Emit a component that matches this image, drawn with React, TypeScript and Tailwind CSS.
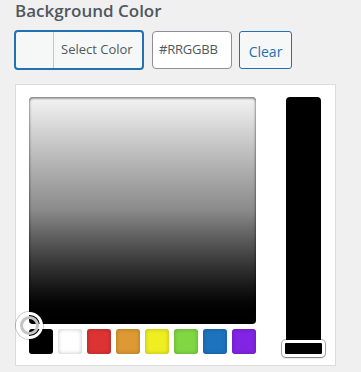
const SWATCHES = ['#000000', '#ffffff', '#dd3333', '#dd9933', '#eeee22', '#81d742', '#1e73be', '#8224e3'];

export default function App() {
  return (
    <div className="min-h-[372px] w-[361px] bg-[#f0f0f1] pl-[14px] text-[#3c434a]" style={{ fontFamily: '"Open Sans", "Noto Sans", sans-serif' }}>
      <h2 className="h-[22px] pl-[1px] text-[17px] font-semibold leading-[22px] text-[#50575e]">Background Color</h2>

      <div className="mt-[8px] flex items-center">
        <button className="flex h-[40px] w-[130px] items-stretch overflow-hidden rounded-[4px] border-2 border-[#2271b1] bg-[#f6f7f7] p-0">
          <span className="w-[38px] border-r border-[#c3c4c7]" />
          <span className="flex flex-1 items-center pl-[7px] text-[13px] text-[#50575e]">Select Color</span>
        </button>
        <input
          readOnly
          placeholder="#RRGGBB"
          className="ml-[8px] h-[38px] w-[80px] rounded-[4px] border border-[#8c8f94] bg-white px-[6px] pb-[2px] text-[13px] tracking-[-0.2px] text-[#2c3338] placeholder:text-[#50575e] focus:outline-none"
        />
        <button className="ml-[7px] h-[38px] w-[53px] rounded-[3px] border border-[#2271b1] bg-[#f6f7f7] pt-[2px] text-[14px] text-[#2271b1]">Clear</button>
      </div>

      <div className="relative ml-[1px] mt-[14px] flex h-[282px] w-[321px] border border-[#dcdcde] bg-white pl-[13px] pt-[12px]">
        <div className="flex flex-col">
          <div className="h-[227px] w-[227px] rounded-[4px] bg-gradient-to-b from-[#f4f4f4] via-[#8a8a8a] to-black shadow-[inset_0_0_3px_rgba(0,0,0,0.6),inset_0_2px_2px_rgba(0,0,0,0.25)]" />
          <div className="mt-[5px] flex gap-[5px]">
            {SWATCHES.map((c) => (
              <span
                key={c}
                className="h-[25px] w-[24px] rounded-[3px] shadow-[inset_0_0_4px_rgba(0,0,0,0.25)]"
                style={{ backgroundColor: c }}
              />
            ))}
          </div>
        </div>
        <div className="ml-[30px] h-[257px] w-[35px] rounded-t-[4px] bg-black" />

        {/* square handle */}
        <div className="absolute left-[0px] top-[227px] flex h-[27px] w-[27px] items-center justify-center rounded-full border-[3px] border-white shadow-[0_0_0_1px_rgba(0,0,0,0.22)]">
          <div className="h-[19px] w-[19px] rounded-full border-[3px] border-[#c4c4c4]" />
        </div>

        {/* strip handle */}
        <div className="absolute left-[266px] top-[255px] h-[17px] w-[43px] rounded-[4px] border-[3px] border-white bg-black shadow-[0_0_0_1px_rgba(0,0,0,0.3),0_1px_2px_rgba(0,0,0,0.3)]" />
      </div>
    </div>
  );
}
